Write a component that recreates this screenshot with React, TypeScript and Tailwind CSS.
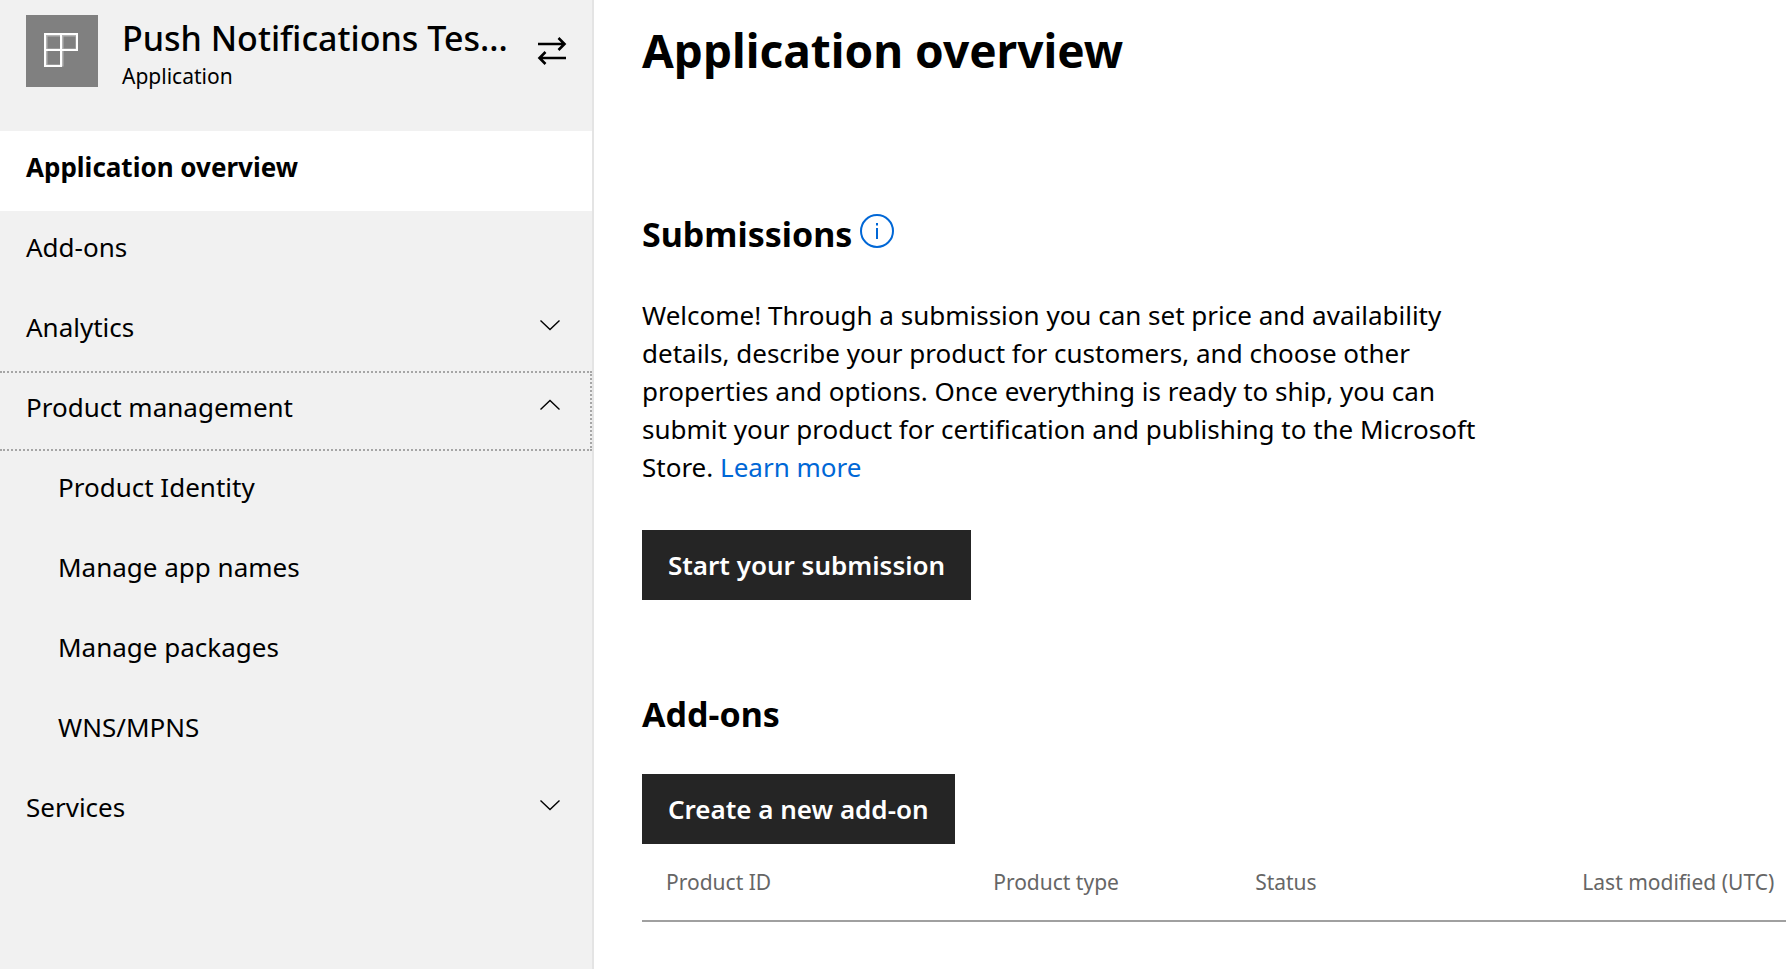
import type { ReactNode } from "react";

function AppTileIcon() {
  return (
    <svg width="72" height="72" viewBox="0 0 72 72" fill="none" stroke="#fff" strokeWidth="2" aria-hidden="true">
      <path d="M20.5 20.5H50.5V34.5H20.5ZM36.5 20.5V50.5H20.5V34.5" stroke="#b4b4b4" />
      <path d="M19 19H51V35H19ZM35 19V51H19V35" />
    </svg>
  );
}

function SwapIcon() {
  return (
    <svg width="30" height="30" viewBox="0 0 30 30" fill="none" stroke="#000" strokeWidth="2.6" aria-hidden="true">
      <path d="M1 8H27M21.5 2L27.5 8L21.5 14M29 22H3M8.5 16L2.5 22L8.5 28" />
    </svg>
  );
}

function Chevron({ up = false }: { up?: boolean }) {
  return (
    <svg width="22" height="12" viewBox="0 0 22 12" fill="none" stroke="#000" strokeWidth="1.4" aria-hidden="true">
      <path d={up ? "M1.5 10.5L11 1.5L20.5 10.5" : "M1.5 1.5L11 10.5L20.5 1.5"} />
    </svg>
  );
}

function InfoIcon() {
  return (
    <svg width="34" height="34" viewBox="0 0 34 34" fill="none" stroke="#0067d6" strokeWidth="2" aria-hidden="true">
      <circle cx="17" cy="17" r="16" />
      <path d="M17 14V25M17 9V11.5" />
    </svg>
  );
}

function NavLink({ children, nested = false, current = false }: { children: ReactNode; nested?: boolean; current?: boolean }) {
  return (
    <a
      href="#"
      aria-current={current ? "page" : undefined}
      className={`flex h-20 items-center pb-2 pr-8 ${nested ? "pl-[58px]" : "pl-[26px]"} ${current ? "bg-white font-bold" : ""}`}
    >
      {children}
    </a>
  );
}

function NavGroup({ label, open = false }: { label: string; open?: boolean }) {
  return (
    <button
      type="button"
      aria-expanded={open}
      className={`flex h-20 w-full items-center justify-between border-y-2 border-r-2 border-dotted pb-2 pl-[26px] pr-[29px] text-left ${
        open ? "border-[#a6a6a6]" : "border-transparent"
      }`}
    >
      {label}
      <span className="pb-1">
        <Chevron up={open} />
      </span>
    </button>
  );
}

function PrimaryButton({ children }: { children: ReactNode }) {
  return (
    <button type="button" className="h-[70px] bg-[#252525] px-[26px] text-[26px] font-semibold text-white">
      {children}
    </button>
  );
}

export default function App() {
  return (
    <div className="flex min-h-screen bg-white font-['Noto_Sans','Open_Sans',sans-serif] text-[26px] leading-[38px] text-black">
      <aside className="w-[594px] shrink-0 border-r-2 border-[#e4e4e4] bg-[#f1f1f1]">
        <header className="flex h-[131px] items-start pl-[26px] pr-[25px] pt-[15px]">
          <div className="size-[72px] shrink-0 bg-[#808080]">
            <AppTileIcon />
          </div>
          <div className="ml-6 min-w-0 flex-1">
            <p className="truncate text-[34px] font-medium leading-[46px]">Push Notifications Tes...</p>
            <p className="text-[21px] leading-[30px]">Application</p>
          </div>
          <button type="button" aria-label="Switch product" className="mt-[21px]">
            <SwapIcon />
          </button>
        </header>
        <nav>
          <NavLink current>Application overview</NavLink>
          <NavLink>Add-ons</NavLink>
          <NavGroup label="Analytics" />
          <NavGroup label="Product management" open />
          <NavLink nested>Product Identity</NavLink>
          <NavLink nested>Manage app names</NavLink>
          <NavLink nested>Manage packages</NavLink>
          <NavLink nested>WNS/MPNS</NavLink>
          <NavGroup label="Services" />
        </nav>
      </aside>

      <main className="min-w-0 flex-1 pl-12">
        <h1 className="pt-5 text-[46px] font-bold leading-[60px]">Application overview</h1>

        <section className="pt-[130px]">
          <div className="flex items-start gap-2">
            <h2 className="text-[34px] font-bold leading-[48px]">Submissions</h2>
            <button type="button" aria-label="About submissions" className="mt-1">
              <InfoIcon />
            </button>
          </div>
          <p className="max-w-[864px] pb-11 pt-[38px]">
            Welcome! Through a submission you can set price and availability details, describe your product for
            customers, and choose other properties and options. Once everything is ready to ship, you can submit your
            product for certification and publishing to the Microsoft Store.{" "}
            <a href="#" className="text-[#0067d6]">
              Learn more
            </a>
          </p>
          <PrimaryButton>Start your submission</PrimaryButton>
        </section>

        <section className="pt-[90px]">
          <h2 className="pb-9 text-[34px] font-bold leading-[48px]">Add-ons</h2>
          <PrimaryButton>Create a new add-on</PrimaryButton>
          <table className="w-full table-fixed border-collapse text-left text-[21px] leading-[30px] text-[#666]">
            <colgroup>
              <col className="w-[28.6%]" />
              <col className="w-[22.9%]" />
              <col className="w-[28.6%]" />
              <col />
            </colgroup>
            <thead>
              <tr className="h-[77px] border-b-2 border-[#a0a0a0]">
                <th scope="col" className="pl-6 font-normal">Product ID</th>
                <th scope="col" className="pl-6 font-normal">Product type</th>
                <th scope="col" className="pl-6 font-normal">Status</th>
                <th scope="col" className="whitespace-nowrap pl-6 font-normal">Last modified (UTC)</th>
              </tr>
            </thead>
          </table>
        </section>
      </main>
    </div>
  );
}
